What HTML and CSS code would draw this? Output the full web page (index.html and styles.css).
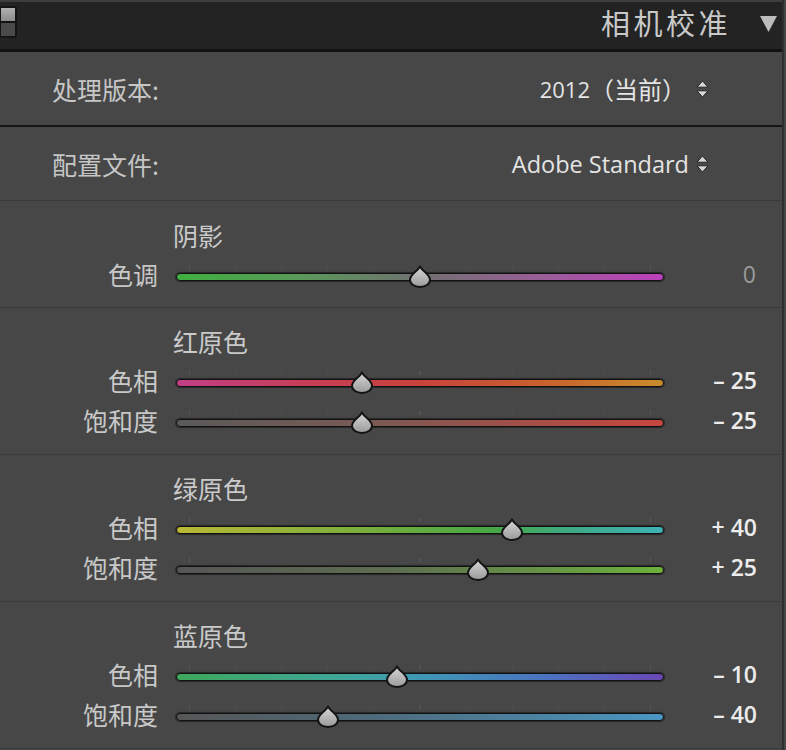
FILE: index.html
```html
<!DOCTYPE html>
<html lang="zh-CN">
<head>
<meta charset="utf-8">
<title>相机校准</title>
<link rel="stylesheet" href="styles.css">
</head>
<body>
<div class="panel">
  <header class="head">
    <span class="toggle"><span class="tg-top"></span><span class="tg-bot"></span></span>
    <h1 class="title">相机校准</h1>
    <svg class="tri" width="17" height="17" viewBox="0 0 17 17"><polygon points="0,1 17,1 8.5,17" fill="#bcbcbc"/></svg>
  </header>

  <div class="setting setting-first">
    <span class="set-label">处理版本:</span>
    <span class="set-value"><span class="num">2012</span>（当前）<svg class="updown" width="13" height="18" viewBox="0 0 13 18"><polygon points="6.5,1 12,7.2 1,7.2" fill="#d6d6d6" stroke="#262626" stroke-width="1" stroke-linejoin="round"/><polygon points="1,10.8 12,10.8 6.5,17" fill="#d6d6d6" stroke="#262626" stroke-width="1" stroke-linejoin="round"/></svg></span>
  </div>

  <div class="setting">
    <span class="set-label">配置文件:</span>
    <span class="set-value"><span class="num wide">Adobe Standard</span><svg class="updown tight" width="13" height="18" viewBox="0 0 13 18"><polygon points="6.5,1 12,7.2 1,7.2" fill="#d6d6d6" stroke="#262626" stroke-width="1" stroke-linejoin="round"/><polygon points="1,10.8 12,10.8 6.5,17" fill="#d6d6d6" stroke="#262626" stroke-width="1" stroke-linejoin="round"/></svg></span>
  </div>

  <section class="group group-shadow">
    <h2 class="g-title">阴影</h2>
    <div class="srow">
      <span class="s-label">色调</span>
      <div class="slider">
        <div class="ticks"></div>
        <div class="track tr-tint"></div>
        <div class="rail"><span class="thumb" style="left:50%"></span></div>
      </div>
      <span class="s-val dim">0</span>
    </div>
  </section>

  <section class="group">
    <h2 class="g-title">红原色</h2>
    <div class="srow">
      <span class="s-label">色相</span>
      <div class="slider">
        <div class="ticks"></div>
        <div class="track tr-red-hue"></div>
        <div class="rail"><span class="thumb" style="left:37.5%"></span></div>
      </div>
      <span class="s-val">– 25</span>
    </div>
    <div class="srow">
      <span class="s-label">饱和度</span>
      <div class="slider">
        <div class="ticks"></div>
        <div class="track tr-red-sat"></div>
        <div class="rail"><span class="thumb" style="left:37.5%"></span></div>
      </div>
      <span class="s-val">– 25</span>
    </div>
  </section>

  <section class="group">
    <h2 class="g-title">绿原色</h2>
    <div class="srow">
      <span class="s-label">色相</span>
      <div class="slider">
        <div class="ticks"></div>
        <div class="track tr-green-hue"></div>
        <div class="rail"><span class="thumb" style="left:70%"></span></div>
      </div>
      <span class="s-val">+ 40</span>
    </div>
    <div class="srow">
      <span class="s-label">饱和度</span>
      <div class="slider">
        <div class="ticks"></div>
        <div class="track tr-green-sat"></div>
        <div class="rail"><span class="thumb" style="left:62.5%"></span></div>
      </div>
      <span class="s-val">+ 25</span>
    </div>
  </section>

  <section class="group">
    <h2 class="g-title">蓝原色</h2>
    <div class="srow">
      <span class="s-label">色相</span>
      <div class="slider">
        <div class="ticks"></div>
        <div class="track tr-blue-hue"></div>
        <div class="rail"><span class="thumb" style="left:45%"></span></div>
      </div>
      <span class="s-val">– 10</span>
    </div>
    <div class="srow">
      <span class="s-label">饱和度</span>
      <div class="slider">
        <div class="ticks"></div>
        <div class="track tr-blue-sat"></div>
        <div class="rail"><span class="thumb" style="left:30%"></span></div>
      </div>
      <span class="s-val">– 40</span>
    </div>
  </section>
</div>
</body>
</html>
```

FILE: styles.css
```css
* { box-sizing: border-box; }

html, body {
  margin: 0;
  padding: 0;
  background: #474747;
}

body {
  width: 786px;
  height: 750px;
  overflow: hidden;
  font-family: "Noto Sans CJK SC", "Noto Sans", sans-serif;
  color: #c8c8c8;
}

.panel {
  width: 784px;
  background: #474747;
  border-right: 2px solid #2f2f2f;
  min-height: 750px;
}

/* header */
.head {
  height: 52px;
  display: flex;
  align-items: center;
  background: #232323;
  border-top: 2px solid #3e3e3e;
  border-bottom: 3px solid #121212;
  padding-right: 5px;
}

.toggle {
  align-self: flex-start;
  margin-top: 4px;
  width: 17px;
  height: 32px;
  border: 2px solid #141414;
  border-left-width: 1px;
  border-radius: 2px;
  display: flex;
  flex-direction: column;
  background: #141414;
  gap: 2px;
}
.tg-top {
  flex: 1;
  background: linear-gradient(#b0b0b0, #8c8c8c);
}
.tg-bot {
  flex: 1;
  background: #4a4a4a;
}

.title {
  margin: 0 0 0 auto;
  font-size: 29px;
  font-weight: 400;
  letter-spacing: 3.5px;
  color: #c9c9c9;
  line-height: 1;
  padding-bottom: 7px;
}

.tri {
  margin-left: 29px;
  margin-bottom: 5px;
}

/* settings rows */
.setting {
  height: 74px;
  display: flex;
  align-items: center;
  justify-content: space-between;
  padding: 0 73px 0 52px;
  border-bottom: 1px solid #3b3b3b;
}
.setting-first {
  height: 75px;
  border-bottom: 2px solid #151515;
}

.set-label {
  font-size: 25px;
  color: #c6c6c6;
}

.set-value {
  display: flex;
  align-items: center;
  font-size: 24px;
  color: #e4e4e4;
}
.num {
  font-family: "Open Sans", "Noto Sans", sans-serif;
  font-size: 22px;
}
.num.wide {
  font-size: 23.5px;
}

.updown {
  margin-left: 10px;
}
.updown.tight {
  margin-left: 7px;
}

/* slider groups */
.group {
  padding: 18px 0 14px;
  border-bottom: 1px solid #3b3b3b;
}
.group-shadow {
  padding-top: 19px;
  padding-bottom: 13px;
}

.g-title {
  margin: 0 0 4px;
  padding-left: 173px;
  height: 30px;
  line-height: 30px;
  font-size: 25px;
  font-weight: 400;
  color: #cacaca;
}

.srow {
  height: 40px;
  display: flex;
  align-items: center;
}

.s-label {
  width: 158px;
  text-align: right;
  font-size: 25px;
  color: #c8c8c8;
  line-height: 40px;
}

.slider {
  position: relative;
  width: 488px;
  height: 40px;
  margin-left: 18px;
  padding-top: 11px;
}

.ticks {
  height: 4px;
  margin: 0 13px 0 13px;
  background:
    linear-gradient(to right,
      #585858 0 1px, transparent 1px calc(50% - 0.5px),
      #585858 calc(50% - 0.5px) calc(50% + 0.5px), transparent calc(50% + 0.5px) calc(100% - 1px),
      #585858 calc(100% - 1px)),
    repeating-linear-gradient(to right, #4e4e4e 0 1px, transparent 1px 46.1px);
}

.track {
  margin-top: 4px;
  height: 8px;
  border: 1px solid #111;
  border-radius: 4px;
  box-shadow: 0 0 1px 1px rgba(0, 0, 0, 0.45);
}

.tr-tint { background: linear-gradient(to right, #3fb03f, #5a9a5a 25%, #707070 50%, #9a5e98 75%, #bd3fbb); }
.tr-red-hue { background: linear-gradient(to right, #c33e86, #c63f52 30%, #c8433c 50%, #c8602e 75%, #c98c2c); }
.tr-red-sat { background: linear-gradient(to right, #5a5a5a, #7a5a54 40%, #c8463f); }
.tr-green-hue { background: linear-gradient(to right, #b9b834, #7faf3c 35%, #46a845 65%, #3ea98a 82%, #3fb2b6); }
.tr-green-sat { background: linear-gradient(to right, #565656, #5e6e50 45%, #6cb23c); }
.tr-blue-hue { background: linear-gradient(to right, #3ea85c, #3fa59a 35%, #3f98b6 50%, #4a74c0 75%, #6a48b6); }
.tr-blue-sat { background: linear-gradient(to right, #565656, #4e6a7a 40%, #4a96c2); }

.rail {
  position: absolute;
  left: 13px;
  right: 13px;
  top: 0;
  bottom: 0;
}

.thumb {
  position: absolute;
  top: 11px;
  width: 24px;
  height: 23px;
  margin-left: -12px;
  background: url("data:image/svg+xml;utf8,<svg xmlns='http://www.w3.org/2000/svg' width='24' height='23' viewBox='0 0 24 23'><defs><linearGradient id='g' x1='0' y1='0' x2='0' y2='1'><stop offset='0' stop-color='%23d8d8d8'/><stop offset='1' stop-color='%239a9a9a'/></linearGradient></defs><path d='M12 1.3 C13.8 5.6 22 9.6 22 14.8 C22 19.2 17.5 22 12 22 C6.5 22 2 19.2 2 14.8 C2 9.6 10.2 5.6 12 1.3 Z' fill='url(%23g)' stroke='%23141414' stroke-width='2' stroke-linejoin='round'/></svg>") no-repeat;
}

.s-val {
  width: 93px;
  text-align: right;
  font-family: "Open Sans", "Noto Sans", sans-serif;
  font-size: 23px;
  font-weight: 600;
  color: #ececec;
  line-height: 40px;
}
.s-val.dim {
  font-weight: 400;
  color: #9a9a9a;
  padding-right: 1px;
}
```
